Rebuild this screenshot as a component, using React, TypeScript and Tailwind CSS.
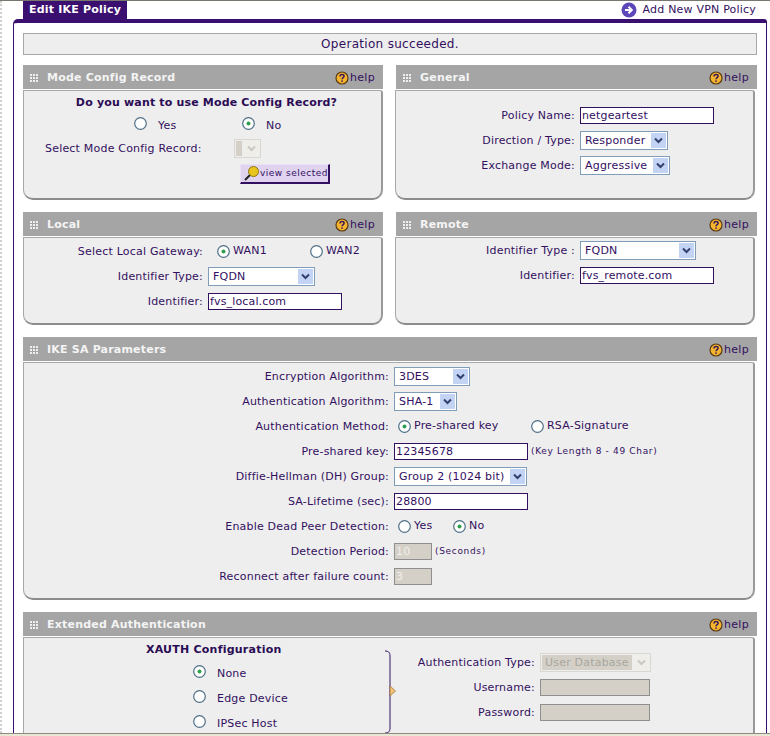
import type { ReactNode } from 'react'

function HelpIcon() {
  return (
    <svg width="14" height="14" viewBox="0 0 14 14" className="shrink-0">
      <circle cx="7" cy="7" r="6" fill="#f5b32e" stroke="#5a3a10" strokeWidth="1.2" />
      <path d="M5 5.4c0-1.3 1-1.9 2-1.9s2.100.6 2.100 1.700c0 1.400-2 1.500-2 3" fill="none" stroke="#3b1a5c" strokeWidth="1.500" />
      <rect x="6.300" y="9.400" width="1.500" height="1.500" fill="#3b1a5c" />
    </svg>
  )
}

function Grip() {
  const dots = [0, 3, 6]
  return (
    <svg width="8" height="8" viewBox="0 0 8 8" className="shrink-0">
      {dots.map(y => dots.map(x => <rect key={`${x}-${y}`} x={x} y={y} width="2" height="2" fill="#eeeeee" />))}
    </svg>
  )
}

function SectionHeader({ title }: { title: string }) {
  return (
    <div className="flex h-[24px] items-center bg-[#a5a5a5] pt-[2px] pr-[8px] pl-[7px]">
      <Grip />
      <span className="ml-[9px] text-[11px] font-bold tracking-[0.2px] text-[#f4f4f4]">{title}</span>
      <span className="ml-auto flex items-center gap-[1px] text-[11px] tracking-[0.3px] text-[#33105f]">
        <HelpIcon />
        help
      </span>
    </div>
  )
}

function Panel({ children, className }: { children: ReactNode; className: string }) {
  return (
    <div className={`mt-[1px] rounded-tr-[3px] rounded-b-[10px] border border-r-2 border-b-2 border-[#a8a8a8] border-r-[#999999] border-b-[#8c8c8c] bg-[#eeeeee] ${className}`}>
      {children}
    </div>
  )
}

function Row({ label, width, children }: { label: string; width: string; children: ReactNode }) {
  return (
    <div className="flex h-[25px] items-center">
      <span className={`${width} shrink-0 pt-[2px] text-right whitespace-nowrap`}>{label}</span>
      <div className="ml-[5px] flex items-center">{children}</div>
    </div>
  )
}

function TextBox({ value, width, disabled }: { value: string; width: string; disabled?: boolean }) {
  return (
    <input
      readOnly
      value={value}
      className={`h-[17px] ${width} border px-[1px] text-[11px] tracking-[0.15px] outline-none ${
        disabled ? 'border-[#8f8f8f] bg-[#d4d0c8] text-[#f0efe9]' : 'border-[#33105f] bg-white text-[#33105f]'
      }`}
    />
  )
}

function Chevron({ disabled }: { disabled?: boolean }) {
  return (
    <svg width="9" height="7" viewBox="0 0 9 7">
      <path d="M1 1.500l3.500 3.500 3.500-3.500" fill="none" stroke={disabled ? '#c9c7bf' : '#33406f'} strokeWidth="2" />
    </svg>
  )
}

function Select({ value, width, disabled }: { value: string; width: string; disabled?: boolean }) {
  return (
    <div className={`flex h-[19px] ${width} items-center border p-[1px] ${disabled ? 'border-[#d9d8d0] bg-[#eeeeee]' : 'border-[#7f9db9] bg-white'}`}>
      <span className={`min-w-0 flex-1 self-stretch overflow-hidden px-[3px] text-[11px] leading-[15px] tracking-[0.2px] whitespace-nowrap ${disabled ? 'bg-[#d4d0c8] text-[#a8a69e]' : 'text-[#33105f]'}`}>
        {value}
      </span>
      <span className={`ml-[2px] flex h-[15px] w-[15px] shrink-0 items-center justify-center ${disabled ? 'bg-[#efeee8]' : 'bg-[#c3d3f4]'}`}>
        <Chevron disabled={disabled} />
      </span>
    </div>
  )
}

function RadioMark({ checked }: { checked?: boolean }) {
  return (
    <svg width="13" height="13" viewBox="0 0 13 13" className="shrink-0">
      <circle cx="6.500" cy="6.500" r="5.800" fill="#ffffff" stroke="#4e6f88" strokeWidth="1.200" />
      {checked && <circle cx="6.500" cy="6.500" r="2" fill="#2f9e4f" />}
    </svg>
  )
}

function Radio({ label, checked, width, gap, labelClass }: { label: string; checked?: boolean; width?: string; gap: string; labelClass?: string }) {
  return (
    <div className={`flex items-center ${gap} ${width ?? ''}`}>
      <RadioMark checked={checked} />
      <span className={labelClass}>{label}</span>
    </div>
  )
}

export default function App() {
  return (
    <div className="flex h-[736px] w-[770px] flex-col overflow-hidden bg-white font-['DejaVu_Sans',sans-serif] text-[11px] tracking-[0.2px] text-[#33105f]">
      <div className="h-[1px] shrink-0 bg-[#77776f]" />
      <div className="flex min-h-0 flex-1">
        {/* dotted strip on the page's left edge */}
        <div className="w-[3px] shrink-0 border-l-2 border-dotted border-[#d0d0d0]" />
        <div className="ml-[10px] w-[754px]">
          <div className="flex h-[18px] items-stretch">
            <div className="ml-[10px] flex w-[104px] items-center justify-center bg-[#3a0f70] text-[11px] font-bold tracking-[0.2px] text-white">
              Edit IKE Policy
            </div>
            <div className="ml-auto flex items-center pr-[11px] text-[11px] tracking-[0.2px]">
              <svg width="16" height="16" viewBox="0 0 16 16" className="mr-[6px]">
                <circle cx="8" cy="8" r="7.500" fill="#5d46b8" />
                <path d="M4 8h6M7.500 4.700l3.300 3.300-3.300 3.300" fill="none" stroke="#ffffff" strokeWidth="2" />
              </svg>
              Add New VPN Policy
            </div>
          </div>
          <div className="h-[800px] rounded-tl-[5px] rounded-tr-[3px] border-x border-t-4 border-[#3a0f70] px-[9px] pt-[10px]">
            <div className="flex h-[22px] items-center justify-center border border-[#a8a8a8] bg-[#eeeeee] text-[12px] tracking-[0.3px]">
              Operation succeeded.
            </div>

            <div className="mt-[10px] grid grid-cols-[360px_361px] gap-x-[13px] gap-y-[12px]">
              <div>
                <SectionHeader title="Mode Config Record" />
                <Panel className="h-[110px]">
                  <div className="pt-[4px] pl-[8px] text-center font-bold tracking-[0.17px] text-[#2b0c55]">Do you want to use Mode Config Record?</div>
                  <div className="mt-[2px] flex items-center pl-[110px]">
                    <Radio label="Yes" width="w-[108px]" gap="gap-[11px]" labelClass="pt-[4px]" />
                    <Radio label="No" checked gap="gap-[11px]" labelClass="pt-[4px]" />
                  </div>
                  <div className="mt-[2px] flex h-[25px] items-center pl-[21px]">
                    <span className="w-[189px] shrink-0 pt-[2px]">Select Mode Config Record:</span>
                    <Select value="" width="w-[27px]" disabled />
                  </div>
                  <div className="mt-[3px] pl-[216px]">
                    <div className="flex h-[20px] w-[90px] items-center border border-r-2 border-b-2 border-[#e9e2f5] border-r-[#33105f] border-b-[#33105f] bg-[#dfd3ef] pl-[3px] text-[9px] tracking-[0.5px] whitespace-nowrap">
                      <svg width="15" height="15" viewBox="0 0 15 15" className="mr-[1px] shrink-0">
                        <path d="M1 14l5-5" stroke="#222222" strokeWidth="2" />
                        <circle cx="9.500" cy="5.500" r="5" fill="#e8c51e" stroke="#8a7410" strokeWidth="1" />
                      </svg>
                      view selected
                    </div>
                  </div>
                </Panel>
              </div>

              <div>
                <SectionHeader title="General" />
                <Panel className="mr-[2px] -ml-[1px] h-[110px] pt-[12px]">
                  <Row label="Policy Name:" width="w-[179px]"><TextBox value="netgeartest" width="w-[134px]" /></Row>
                  <Row label="Direction / Type:" width="w-[179px]"><Select value="Responder" width="w-[88px]" /></Row>
                  <Row label="Exchange Mode:" width="w-[179px]"><Select value="Aggressive" width="w-[90px]" /></Row>
                </Panel>
              </div>

              <div>
                <SectionHeader title="Local" />
                <Panel className="h-[88px] pt-[1px]">
                  <Row label="Select Local Gateway:" width="w-[179px]">
                    <div className="flex items-center pl-[9px]">
                      <Radio label="WAN1" checked width="w-[93px]" gap="gap-[3px]" />
                      <Radio label="WAN2" gap="gap-[3px]" />
                    </div>
                  </Row>
                  <Row label="Identifier Type:" width="w-[179px]"><Select value="FQDN" width="w-[107px]" /></Row>
                  <Row label="Identifier:" width="w-[179px]"><TextBox value="fvs_local.com" width="w-[134px]" /></Row>
                </Panel>
              </div>

              <div>
                <SectionHeader title="Remote" />
                <Panel className="mr-[2px] -ml-[1px] h-[88px]">
                  <Row label="Identifier Type :" width="w-[179px]"><Select value="FQDN" width="w-[116px]" /></Row>
                  <Row label="Identifier:" width="w-[179px]"><TextBox value="fvs_remote.com" width="w-[134px]" /></Row>
                </Panel>
              </div>

              <div className="col-span-2">
                <SectionHeader title="IKE SA Parameters" />
                <Panel className="mr-[2px] h-[238px] pt-[1px]">
                  <Row label="Encryption Algorithm:" width="w-[365px]"><Select value="3DES" width="w-[76px]" /></Row>
                  <Row label="Authentication Algorithm:" width="w-[365px]"><Select value="SHA-1" width="w-[63px]" /></Row>
                  <Row label="Authentication Method:" width="w-[365px]">
                    <div className="flex items-center pl-[4px]">
                      <Radio label="Pre-shared key" checked width="w-[133px]" gap="gap-[3px]" />
                      <Radio label="RSA-Signature" gap="gap-[3px]" />
                    </div>
                  </Row>
                  <Row label="Pre-shared key:" width="w-[365px]">
                    <TextBox value="12345678" width="w-[134px]" />
                    <span className="ml-[3px] text-[9px] tracking-[0.67px]">(Key Length 8 - 49 Char)</span>
                  </Row>
                  <Row label="Diffie-Hellman (DH) Group:" width="w-[365px]"><Select value="Group 2 (1024 bit)" width="w-[133px]" /></Row>
                  <Row label="SA-Lifetime (sec):" width="w-[365px]"><TextBox value="28800" width="w-[134px]" /></Row>
                  <Row label="Enable Dead Peer Detection:" width="w-[365px]">
                    <div className="flex items-center pl-[4px]">
                      <Radio label="Yes" width="w-[55px]" gap="gap-[3px]" />
                      <Radio label="No" checked gap="gap-[3px]" />
                    </div>
                  </Row>
                  <Row label="Detection Period:" width="w-[365px]">
                    <TextBox value="10" width="w-[38px]" disabled />
                    <span className="ml-[3px] text-[9px] tracking-[0.67px]">(Seconds)</span>
                  </Row>
                  <Row label="Reconnect after failure count:" width="w-[365px]"><TextBox value="3" width="w-[38px]" disabled /></Row>
                </Panel>
              </div>

              <div className="col-span-2">
                <SectionHeader title="Extended Authentication" />
                <Panel className="mr-[2px] flex h-[200px] pt-[4px]">
                  <div className="w-[361px] shrink-0">
                    <div className="pl-[122px] font-bold tracking-[0.23px] text-[#2b0c55]">XAUTH Configuration</div>
                    <div className="pl-[169px]">
                      <div className="flex h-[25px] items-center"><Radio label="None" checked gap="gap-[11px]" labelClass="pt-[6px]" /></div>
                      <div className="flex h-[25px] items-center"><Radio label="Edge Device" gap="gap-[11px]" labelClass="pt-[6px]" /></div>
                      <div className="flex h-[25px] items-center"><Radio label="IPSec Host" gap="gap-[11px]" labelClass="pt-[6px]" /></div>
                    </div>
                  </div>
                  <svg width="12" height="84" viewBox="0 0 12 84" className="mt-[8px] shrink-0">
                    <path d="M0 1c3 0 5 1 5 5v72c0 4-2 5-5 5" fill="none" stroke="#33105f" strokeWidth="1" />
                    <path d="M5 36l5.500 5-5.500 5z" fill="#f3c074" stroke="#9a6b30" strokeWidth="0.700" />
                  </svg>
                  <div className="pt-[8px]">
                    <Row label="Authentication Type:" width="w-[138px]"><Select value="User Database" width="w-[111px]" disabled /></Row>
                    <Row label="Username:" width="w-[138px]"><TextBox value="" width="w-[110px]" disabled /></Row>
                    <Row label="Password:" width="w-[138px]"><TextBox value="" width="w-[110px]" disabled /></Row>
                  </div>
                </Panel>
              </div>
            </div>
          </div>
        </div>
      </div>
      <div className="h-[3px] shrink-0 border-t border-[#8c8c7c] bg-[#e8e6d4]" />
    </div>
  )
}
